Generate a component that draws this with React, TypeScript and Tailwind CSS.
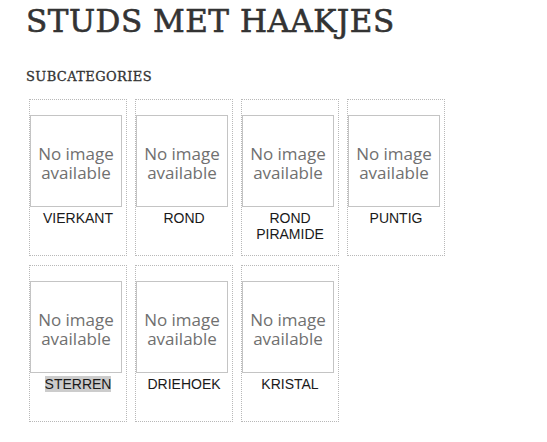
import React from "react";

const items = [
  ["VIERKANT"],
  ["ROND"],
  ["ROND", "PIRAMIDE"],
  ["PUNTIG"],
  ["STERREN"],
  ["DRIEHOEK"],
  ["KRISTAL"],
];

function Placeholder() {
  return (
    <div
      className="w-[92px] h-[92px] border border-[#c4c4c4] flex flex-col items-center justify-center text-[#707070] text-[17px] leading-[19px] pt-[3px]"
      style={{ fontFamily: '"Open Sans", "Noto Sans", sans-serif' }}
    >
      <span>No image</span>
      <span>available</span>
    </div>
  );
}

export default function App() {
  return (
    <div className="bg-white w-[547px] h-[442px] pl-[26px] pt-[2px]">
      <h1
        className="text-[31px] leading-[38px] text-[#333] tracking-[0.5px] [-webkit-text-stroke:0.6px_#333]"
        style={{ fontFamily: '"DejaVu Serif", serif' }}
      >
        STUDS MET HAAKJES
      </h1>
      <h2
        className="mt-[29px] text-[13px] leading-[16px] text-[#333] tracking-[0.4px] [-webkit-text-stroke:0.3px_#333]"
        style={{ fontFamily: '"DejaVu Serif", serif' }}
      >
        SUBCATEGORIES
      </h2>
      <div className="mt-[14px] ml-[3px] grid grid-cols-[98px_98px_98px_98px] gap-x-[8px] gap-y-[9px]">
        {items.map((lines, i) => (
          <div
            key={i}
            className="h-[157px] border border-dotted border-[#b8b8b8] pt-[15px] flex flex-col"
          >
            <Placeholder />
            <div
              className="mt-[3px] text-center text-[14px] leading-[16px] text-[#1a1a1a]"
              style={{ fontFamily: '"Liberation Sans", Arial, sans-serif' }}
            >
              {lines.map((l, j) => (
                <div key={j}>
                  {l === "STERREN" ? (
                    <span className="bg-[#cccccc]">{l}</span>
                  ) : (
                    l
                  )}
                </div>
              ))}
            </div>
          </div>
        ))}
      </div>
    </div>
  );
}
